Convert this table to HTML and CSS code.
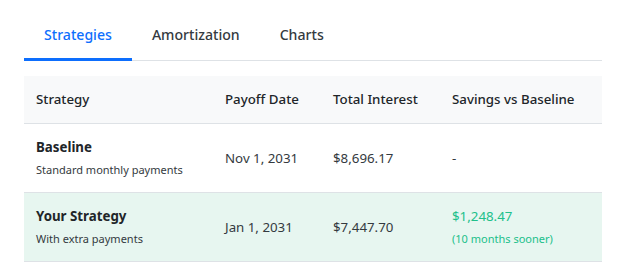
FILE: index.html
```html
<!DOCTYPE html>
<html>
<head>
<meta charset="utf-8">
<link rel="stylesheet" href="styles.css">
</head>
<body>
<div class="page">
  <nav class="tabs">
    <div class="tab active">Strategies</div>
    <div class="tab">Amortization</div>
    <div class="tab">Charts</div>
  </nav>
  <table class="grid">
    <colgroup>
      <col class="c1"><col class="c2"><col class="c3"><col class="c4">
    </colgroup>
    <thead>
      <tr><th>Strategy</th><th>Payoff Date</th><th>Total Interest</th><th>Savings vs Baseline</th></tr>
    </thead>
    <tbody>
      <tr>
        <td><div class="name">Baseline</div><div class="sub">Standard monthly payments</div></td>
        <td>Nov 1, 2031</td>
        <td>$8,696.17</td>
        <td>-</td>
      </tr>
      <tr class="hl">
        <td><div class="name">Your Strategy</div><div class="sub">With extra payments</div></td>
        <td>Jan 1, 2031</td>
        <td>$7,447.70</td>
        <td><div class="save">$1,248.47</div><div class="sub save">(10 months sooner)</div></td>
      </tr>
    </tbody>
  </table>
</div>
</body>
</html>
```
FILE: styles.css
```css
html, body { margin: 0; padding: 0; background: #fff; }
body { font-family: "Noto Sans", "Open Sans", sans-serif; color: #212529; }
.page { width: 578px; padding: 8px 0 0 24px; }
.tabs { display: flex; border-bottom: 1px solid #dee2e6; }
.tab { padding: 16px 20px 12px; font-size: 14.1px; line-height: 22px; color: #343a40; font-weight: 500; border-bottom: 3px solid transparent; margin-bottom: -1px; }
.tab.active { color: #0d6efd; border-bottom-color: #0d6efd; }
.grid { margin-top: 15px; width: 578px; border-collapse: collapse; table-layout: fixed; font-size: 13.3px; }
.c1 { width: 189px; } .c2 { width: 108px; } .c3 { width: 119px; } .c4 { width: 162px; }
.grid th { background: #f8f9fa; text-align: left; font-weight: 500; padding: 13px 12px; line-height: 21px; color: #212529; border-bottom: 1px solid #dee2e6; }
.grid td { padding: 13px 12px; line-height: 20px; color: #343a40; border-bottom: 1px solid #dee2e6; vertical-align: middle; }
.name { font-weight: 700; color: #212529; }
.sub { font-size: 11px; line-height: 18px; margin-top: 4px; color: #343a40; }
.hl td { background: #e7f6f0; }
.save { color: #20c08a; }
```
